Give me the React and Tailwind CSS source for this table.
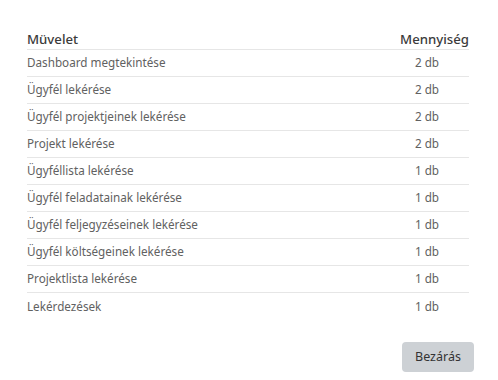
import React from 'react';

const rows = [
  ['Dashboard megtekintése', '2 db'],
  ['Ügyfél lekérése', '2 db'],
  ['Ügyfél projektjeinek lekérése', '2 db'],
  ['Projekt lekérése', '2 db'],
  ['Ügyféllista lekérése', '1 db'],
  ['Ügyfél feladatainak lekérése', '1 db'],
  ['Ügyfél feljegyzéseinek lekérése', '1 db'],
  ['Ügyfél költségeinek lekérése', '1 db'],
  ['Projektlista lekérése', '1 db'],
  ['Lekérdezések', '1 db'],
];

export default function App() {
  return (
    <div
      className="w-[498px] h-[380px] bg-white pt-[31px]"
      style={{ fontFamily: '"Noto Sans", sans-serif' }}
    >
      <div className="mx-[27px] w-[442px]">
        {/* header */}
        <div className="flex h-[19px] items-center justify-between border-b border-[#e6e6e6] text-[13.2px] font-medium text-[#3b3b3b]">
          <span>Müvelet</span>
          <span>Mennyiség</span>
        </div>
        {rows.map(([name, qty], i) => (
          <div
            key={name}
            className={`flex h-[27px] items-center text-[11.7px] text-[#616161] ${
              i < rows.length - 1 ? 'border-b border-[#e6e6e6]' : ''
            }`}
          >
            <span className="flex-1">{name}</span>
            <span className="w-[84px] text-center">{qty}</span>
          </div>
        ))}
      </div>
      <div className="mt-[22px] flex justify-end pr-[24px]">
        <button className="h-[30px] w-[72px] rounded-[4px] bg-[#cdd1d5] text-[12.5px] text-[#333]">
          Bezárás
        </button>
      </div>
    </div>
  );
}
